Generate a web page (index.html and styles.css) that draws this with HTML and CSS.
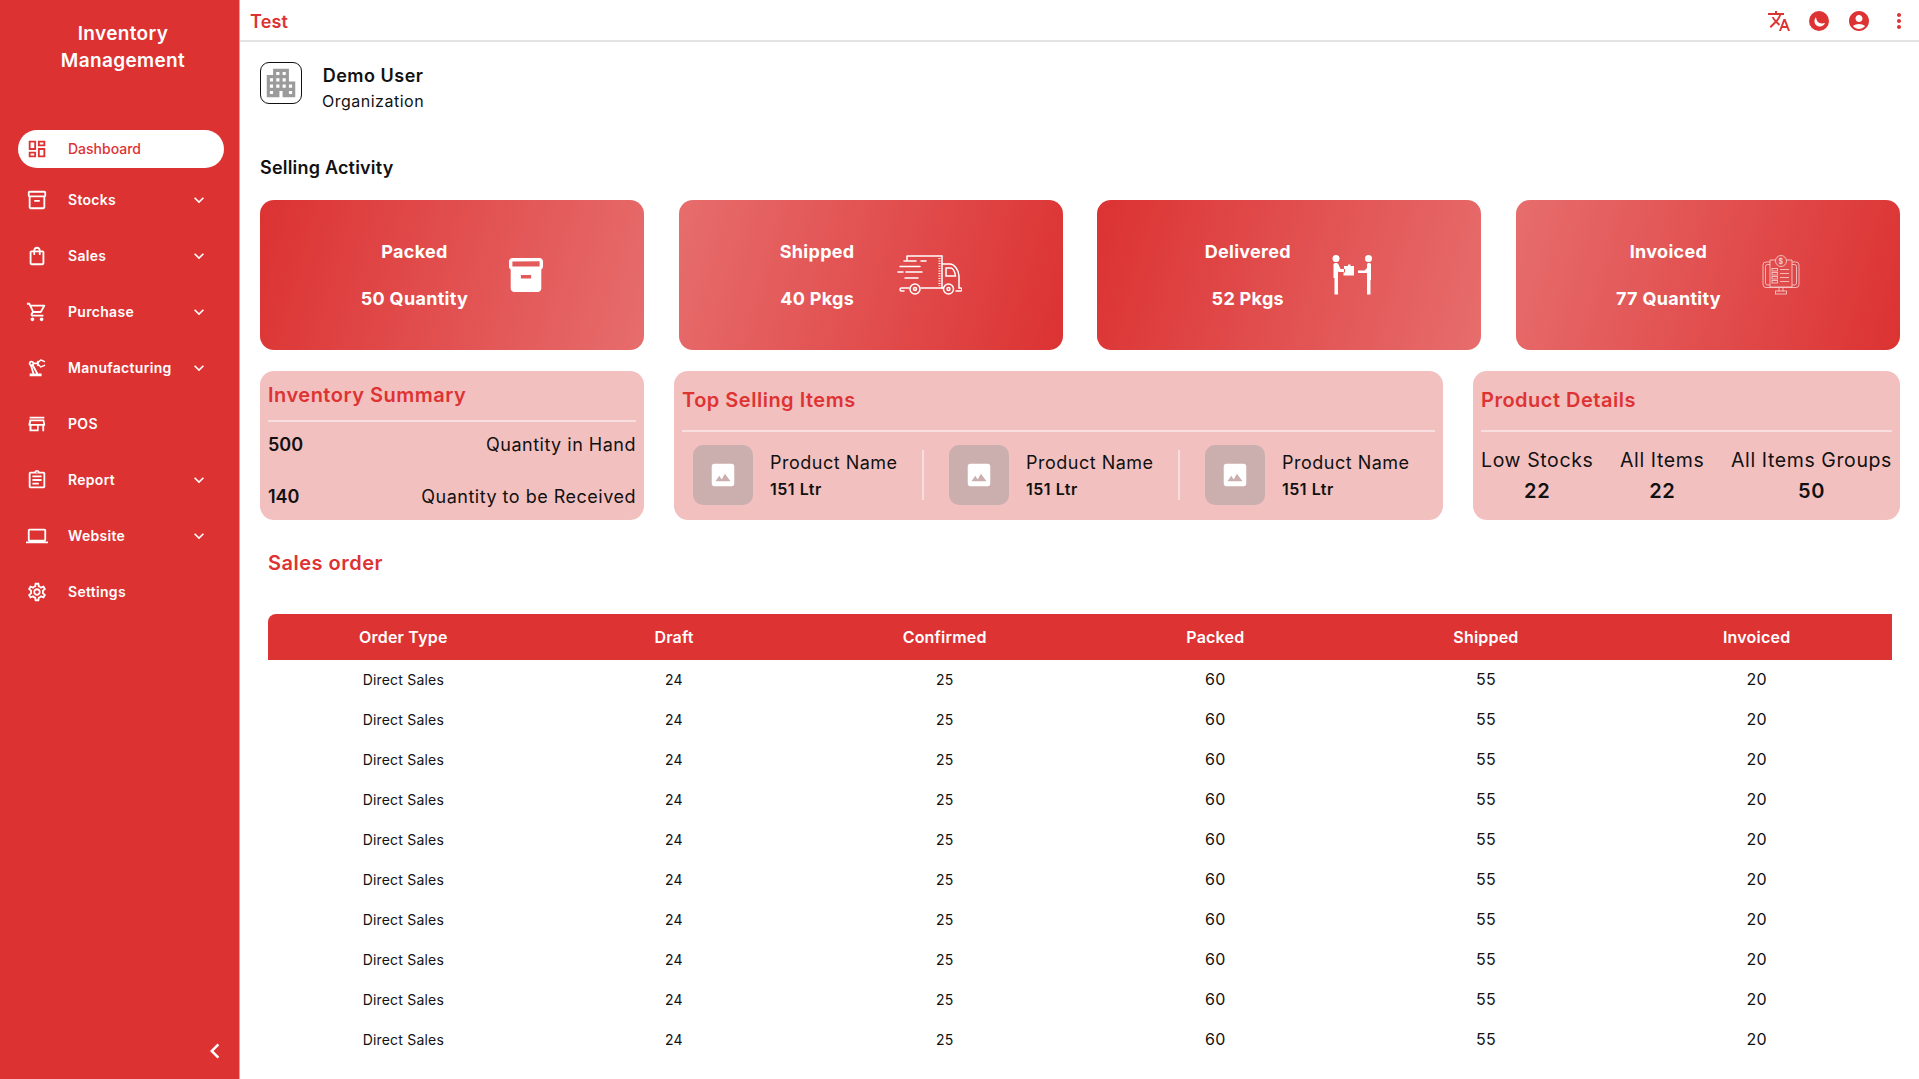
FILE: index.html
```html
<!DOCTYPE html>
<html lang="en">
<head>
<meta charset="UTF-8" />
<meta name="viewport" content="width=device-width, initial-scale=1" />
<title>Inventory Management</title>
<link rel="stylesheet" href="styles.css">
</head>
<body>
<div class="app">

  <!-- Sidebar -->
  <aside class="sidebar">
    <div class="brand">Inventory Management</div>
    <nav class="nav">
      <a class="nav-item active">
        <svg class="nav-icon" viewBox="0 0 24 24"><path d="M19 5v2h-4V5h4M9 5v6H5V5h4m10 8v6h-4v-6h4M9 17v2H5v-2h4M21 3h-8v6h8V3zM11 3H3v10h8V3zm10 8h-8v10h8V11zm-10 4H3v6h8v-6z"/></svg>
        <span class="nav-label">Dashboard</span>
      </a>
      <a class="nav-item">
        <svg class="nav-icon" viewBox="0 0 24 24"><path d="M20 2H4c-1 0-2 .9-2 2v3.01c0 .72.43 1.34 1 1.69V20c0 1.1 1.1 2 2 2h14c.9 0 2-.9 2-2V8.7c.57-.35 1-.97 1-1.69V4c0-1.1-1-2-2-2zm-1 18H5V9h14v11zm1-13H4V4h16v3zM9 12h6v2H9z"/></svg>
        <span class="nav-label">Stocks</span>
        <svg class="nav-arrow" viewBox="0 0 24 24"><path d="M16.59 8.59L12 13.17 7.41 8.59 6 10l6 6 6-6z"/></svg>
      </a>
      <a class="nav-item">
        <svg class="nav-icon" viewBox="0 0 24 24"><path d="M18 6h-2c0-2.21-1.79-4-4-4S8 3.79 8 6H6c-1.1 0-2 .9-2 2v12c0 1.1.9 2 2 2h12c1.1 0 2-.9 2-2V8c0-1.1-.9-2-2-2zm-6-2c1.1 0 2 .9 2 2h-4c0-1.1.9-2 2-2zm6 16H6V8h2v2c0 .55.45 1 1 1s1-.45 1-1V8h4v2c0 .55.45 1 1 1s1-.45 1-1V8h2v12z"/></svg>
        <span class="nav-label">Sales</span>
        <svg class="nav-arrow" viewBox="0 0 24 24"><path d="M16.59 8.59L12 13.17 7.41 8.59 6 10l6 6 6-6z"/></svg>
      </a>
      <a class="nav-item">
        <svg class="nav-icon" viewBox="0 0 24 24"><path d="M15.55 13c.75 0 1.41-.41 1.75-1.03l3.58-6.49c.37-.66-.11-1.48-.87-1.48H5.21l-.94-2H1v2h2l3.6 7.59-1.35 2.44C4.52 15.37 5.48 17 7 17h12v-2H7l1.1-2h7.45zM6.16 6h12.15l-2.76 5H8.53L6.16 6zM7 18c-1.1 0-1.99.9-1.99 2S5.9 22 7 22s2-.9 2-2-.9-2-2-2zm10 0c-1.1 0-1.99.9-1.99 2s.89 2 1.99 2 2-.9 2-2-.9-2-2-2z"/></svg>
        <span class="nav-label">Purchase</span>
        <svg class="nav-arrow" viewBox="0 0 24 24"><path d="M16.59 8.59L12 13.17 7.41 8.59 6 10l6 6 6-6z"/></svg>
      </a>
      <a class="nav-item">
        <svg class="nav-icon" viewBox="0 0 24 24"><path d="M19.93 8.35l-3.6 1.68L14 7.7V6.3l2.33-2.33 3.6 1.68c.38.18.82.01 1-.36.18-.38.01-.82-.36-1l-3.92-1.83c-.38-.18-.83-.1-1.13.2L13.78 4.4c-.18-.24-.46-.4-.78-.4-.55 0-1 .45-1 1v1H8.82C8.34 4.65 6.98 3.73 5.4 4.07c-1.16.25-2.15 1.25-2.36 2.43-.22 1.32.46 2.47 1.48 3.08L7.08 18H4v3h13v-3h-3.62L8.41 8.77c.17-.24.31-.49.41-.77H12v1c0 .55.45 1 1 1 .32 0 .6-.16.78-.4l1.74 1.74c.3.3.75.38 1.13.2l3.92-1.83c.38-.18.54-.62.36-1-.18-.37-.62-.54-1-.36zM6 8c-.55 0-1-.45-1-1s.45-1 1-1 1 .45 1 1-.45 1-1 1zm5.11 10H9.17l-2.46-8h.1l4.3 8z"/></svg>
        <span class="nav-label">Manufacturing</span>
        <svg class="nav-arrow" viewBox="0 0 24 24"><path d="M16.59 8.59L12 13.17 7.41 8.59 6 10l6 6 6-6z"/></svg>
      </a>
      <a class="nav-item">
        <svg class="nav-icon" viewBox="0 0 24 24"><path d="M18.36 9l.6 3H5.04l.6-3h12.72M20 4H4v2h16V4zm.2 3H3.8L2.8 12v2h1v6h10v-6h4v6h2v-6h1v-2l-1-5zM6 18v-4h6v4H6z"/></svg>
        <span class="nav-label">POS</span>
      </a>
      <a class="nav-item">
        <svg class="nav-icon" viewBox="0 0 24 24"><path d="M7 15h7v2H7zm0-4h10v2H7zm0-4h10v2H7zm12-4h-4.18C14.4 1.84 13.3 1 12 1c-1.3 0-2.4.84-2.82 2H5c-.14 0-.27.01-.4.04-.39.08-.74.28-1.01.55-.18.18-.33.4-.43.64-.1.23-.16.49-.16.77v14c0 .27.06.54.16.78s.25.45.43.64c.27.27.62.47 1.01.55.13.02.26.03.4.03h14c1.1 0 2-.9 2-2V5c0-1.1-.9-2-2-2zm-7-.25c.41 0 .75.34.75.75s-.34.75-.75.75-.75-.34-.75-.75.34-.75.75-.75zM19 19H5V5h14v14z"/></svg>
        <span class="nav-label">Report</span>
        <svg class="nav-arrow" viewBox="0 0 24 24"><path d="M16.59 8.59L12 13.17 7.41 8.59 6 10l6 6 6-6z"/></svg>
      </a>
      <a class="nav-item">
        <svg class="nav-icon" viewBox="0 0 24 24"><path d="M20 18c1.1 0 1.99-.9 1.99-2L22 6c0-1.1-.9-2-2-2H4c-1.1 0-2 .9-2 2v10c0 1.1.9 2 2 2H0v2h24v-2h-4zM4 6h16v10H4V6z"/></svg>
        <span class="nav-label">Website</span>
        <svg class="nav-arrow" viewBox="0 0 24 24"><path d="M16.59 8.59L12 13.17 7.41 8.59 6 10l6 6 6-6z"/></svg>
      </a>
      <a class="nav-item">
        <svg class="nav-icon" viewBox="0 0 24 24"><path d="M19.43 12.98c.04-.32.07-.64.07-.98 0-.34-.03-.66-.07-.98l2.11-1.65c.19-.15.24-.42.12-.64l-2-3.46c-.09-.16-.26-.25-.44-.25-.06 0-.12.01-.17.03l-2.49 1c-.52-.4-1.08-.73-1.69-.98l-.38-2.65C14.46 2.18 14.25 2 14 2h-4c-.25 0-.46.18-.49.42l-.38 2.65c-.61.25-1.17.59-1.69.98l-2.49-1c-.06-.02-.12-.03-.18-.03-.17 0-.34.09-.43.25l-2 3.46c-.13.22-.07.49.12.64l2.11 1.65c-.04.32-.07.65-.07.98 0 .33.03.66.07.98l-2.11 1.65c-.19.15-.24.42-.12.64l2 3.46c.09.16.26.25.44.25.06 0 .12-.01.17-.03l2.49-1c.52.4 1.08.73 1.69.98l.38 2.65c.03.24.24.42.49.42h4c.25 0 .46-.18.49-.42l.38-2.65c.61-.25 1.17-.59 1.69-.98l2.49 1c.06.02.12.03.18.03.17 0 .34-.09.43-.25l2-3.46c.12-.22.07-.49-.12-.64l-2.11-1.65zm-1.98-1.71c.04.31.05.52.05.73 0 .21-.02.43-.05.73l-.14 1.13.89.7 1.08.84-.7 1.21-1.27-.51-1.04-.42-.9.68c-.43.32-.84.56-1.25.73l-1.06.43-.16 1.13-.2 1.35h-1.4l-.19-1.35-.16-1.13-1.06-.43c-.43-.18-.83-.41-1.23-.71l-.91-.7-1.06.43-1.27.51-.7-1.21 1.08-.84.89-.7-.14-1.13c-.03-.31-.05-.54-.05-.74s.02-.43.05-.73l.14-1.13-.89-.7-1.08-.84.7-1.21 1.27.51 1.04.42.9-.68c.43-.32.84-.56 1.25-.73l1.06-.43.16-1.13.2-1.35h1.39l.19 1.35.16 1.13 1.06.43c.43.18.83.41 1.23.71l.91.7 1.06-.43 1.27-.51.7 1.21-1.07.85-.89.7.14 1.13zM12 8c-2.21 0-4 1.79-4 4s1.79 4 4 4 4-1.79 4-4-1.79-4-4-4zm0 6c-1.1 0-2-.9-2-2s.9-2 2-2 2 .9 2 2-.9 2-2 2z"/></svg>
        <span class="nav-label">Settings</span>
      </a>
    </nav>
    <div class="collapse">
      <svg viewBox="0 0 24 24"><path d="M15.41 7.41L14 6l-6 6 6 6 1.41-1.41L10.83 12z"/></svg>
    </div>
  </aside>

  <div class="main">

    <!-- Top bar -->
    <header class="topbar">
      <div class="topbar-title">Test</div>
      <div class="topbar-icons">
        <svg viewBox="0 0 24 24"><path d="M12.87 15.07l-2.54-2.51.03-.03c1.74-1.94 2.98-4.17 3.71-6.53H17V4h-7V2H8v2H1v1.99h11.17C11.5 7.92 10.44 9.75 9 11.35 8.07 10.32 7.3 9.19 6.69 8h-2c.73 1.63 1.73 3.17 2.98 4.56l-5.09 5.02L4 19l5-5 3.11 3.11.76-2.04zM18.5 10h-2L12 22h2l1.12-3h4.75L21 22h2l-4.5-12zm-2.62 7l1.62-4.33L19.12 17h-3.24z"/></svg>
        <svg viewBox="0 0 24 24"><circle cx="12" cy="12" r="10"/><path class="moon" d="M9 8C6.500 11 7 15.500 10.500 17c3 1.500 6.500 0 7.500-3-3 1-6 .5-7.500-1.500C9.500 11 9 9.500 9 8z"/></svg>
        <svg viewBox="0 0 24 24"><path d="M12 2C6.48 2 2 6.48 2 12s4.48 10 10 10 10-4.48 10-10S17.52 2 12 2zm0 4c1.93 0 3.5 1.57 3.5 3.5S13.93 13 12 13s-3.5-1.57-3.5-3.5S10.07 6 12 6zm0 14c-2.03 0-4.43-.82-6.14-2.88C7.55 15.8 9.68 15 12 15s4.45.8 6.14 2.12C16.43 19.18 14.03 20 12 20z"/></svg>
        <svg viewBox="0 0 24 24"><path d="M12 8c1.1 0 2-.9 2-2s-.9-2-2-2-2 .9-2 2 .9 2 2 2zm0 2c-1.1 0-2 .9-2 2s.9 2 2 2 2-.9 2-2-.9-2-2-2zm0 6c-1.1 0-2 .9-2 2s.9 2 2 2 2-.9 2-2-.9-2-2-2z"/></svg>
      </div>
    </header>

    <div class="content">

      <div class="org">
        <div class="org-logo">
          <svg viewBox="0 0 24 24"><path d="M17 11V3H7v4H3v14h8v-4h2v4h8V11h-4zM7 19H5v-2h2v2zm0-4H5v-2h2v2zm0-4H5V9h2v2zm4 4H9v-2h2v2zm0-4H9V9h2v2zm0-4H9V5h2v2zm4 8h-2v-2h2v2zm0-4h-2V9h2v2zm0-4h-2V5h2v2zm4 12h-2v-2h2v2zm0-4h-2v-2h2v2z"/></svg>
        </div>
        <div class="org-text">
          <div class="org-name">Demo User</div>
          <div class="org-type">Organization</div>
        </div>
      </div>

      <h2 class="section-title">Selling Activity</h2>

      <!-- Activity cards -->
      <div class="cards">
        <div class="card card-right">
          <div class="card-text"><div>Packed</div><div>50 Quantity</div></div>
          <svg class="card-icon-box" viewBox="2 2 20 20"><path d="M20 2H4c-1 0-2 .9-2 2v3.01c0 .72.43 1.34 1 1.69V20c0 1.1 1.1 2 2 2h14c.9 0 2-.9 2-2V8.7c.57-.35 1-.97 1-1.69V4c0-1.1-1-2-2-2zm-5 12H9v-2h6v2zm5-7H4V4l16-.02V7z"/></svg>
        </div>
        <div class="card card-left">
          <div class="card-text"><div>Shipped</div><div>40 Pkgs</div></div>
          <svg class="card-art card-art-truck" viewBox="0 0 66 40">
            <path d="M11 1h35v32H25M11 1v4M13 33H5.500a1.500 1.500 0 0 0 0 3H8"/>
            <path d="M46 9h8c4 0 9 6 9 12v12h1.500a1.500 1.500 0 0 1 0 3H60M46 33h1M50 13h5c2 0 4 4 4.500 8H50z"/>
            <path d="M8 6h12M25 6h5M4 11.500h20M2 17h5M10 17h16M9 23h13"/>
            <circle cx="19" cy="34" r="5"/><circle cx="19" cy="34" r="1.500"/>
            <circle cx="52.500" cy="34" r="5"/><circle cx="52.500" cy="34" r="1.500"/>
            <path class="dotted" d="M43.500 3v28"/>
          </svg>
        </div>
        <div class="card card-right">
          <div class="card-text"><div>Delivered</div><div>52 Pkgs</div></div>
          <svg class="card-art card-art-people" viewBox="22 14 42 42">
            <circle cx="26" cy="18.500" r="3.500"/><circle cx="58.500" cy="18.500" r="3.500"/>
            <path d="M23.500 24.500c0-1 1-1.500 2.500-1.500s2 .5 2.500 1.500l2 4.500h3.500v3h-5.500l-.5-1V54.500h-3.500V38h-1z"/>
            <path d="M34 26h4v-1.500h2.500V26H44v9.500H33.500V32.500h1.500V29h-1z"/>
            <path d="M57 24.500c0-1 1-1.500 2-1.500s2 .5 2 1.500V40h-.5v14.500h-3.500V33h-9v-2.500h6.500L57 28z"/>
          </svg>
        </div>
        <div class="card card-left">
          <div class="card-text"><div>Invoiced</div><div>77 Quantity</div></div>
          <svg class="card-art card-art-invoice" viewBox="21 15 38 40">
            <rect x="22" y="22" width="36" height="25.500" rx="3"/>
            <rect x="24.500" y="24.500" width="31" height="20.500" rx="2"/>
            <path class="fill-card" d="M29 20h22v27H29z"/>
            <circle class="fill-card" cx="40" cy="21" r="5.500"/>
            <text class="coin" x="40" y="23.500">$</text>
            <rect x="31" y="28.500" width="5.500" height="2.500"/><rect x="31" y="32.500" width="5.500" height="2.500"/>
            <rect x="31" y="36.500" width="5.500" height="2.500"/><rect x="31" y="40.500" width="5.500" height="2.500"/>
            <path d="M39 29.500h9M39 33.500h9M39 37.500h9M39 41.500h9M38 47.500v4M42 47.500v4"/>
            <rect x="34.500" y="51" width="11" height="3"/>
          </svg>
        </div>
      </div>

      <!-- Summary row -->
      <div class="panels">
        <section class="panel panel-inventory">
          <h3 class="panel-title">Inventory Summary</h3>
          <div class="stat-row"><strong>500</strong><span>Quantity in Hand</span></div>
          <div class="stat-row"><strong>140</strong><span>Quantity to be Received</span></div>
        </section>

        <section class="panel panel-top">
          <h3 class="panel-title">Top Selling Items</h3>
          <div class="products">
            <div class="product">
              <div class="thumb"><svg viewBox="0 0 24 24"><path d="M19 3H5c-1.100 0-2 .9-2 2v14c0 1.100.9 2 2 2h14c1.100 0 2-.9 2-2V5c0-1.100-.9-2-2-2zM6 17l3-4.500 2 3 2.500-4.500 4.500 6z"/></svg></div>
              <div><div class="product-name">Product Name</div><div class="product-qty">151 Ltr</div></div>
            </div>
            <div class="product">
              <div class="thumb"><svg viewBox="0 0 24 24"><path d="M19 3H5c-1.100 0-2 .9-2 2v14c0 1.100.9 2 2 2h14c1.100 0 2-.9 2-2V5c0-1.100-.9-2-2-2zM6 17l3-4.500 2 3 2.500-4.500 4.500 6z"/></svg></div>
              <div><div class="product-name">Product Name</div><div class="product-qty">151 Ltr</div></div>
            </div>
            <div class="product">
              <div class="thumb"><svg viewBox="0 0 24 24"><path d="M19 3H5c-1.100 0-2 .9-2 2v14c0 1.100.9 2 2 2h14c1.100 0 2-.9 2-2V5c0-1.100-.9-2-2-2zM6 17l3-4.500 2 3 2.500-4.500 4.500 6z"/></svg></div>
              <div><div class="product-name">Product Name</div><div class="product-qty">151 Ltr</div></div>
            </div>
          </div>
        </section>

        <section class="panel panel-details">
          <h3 class="panel-title">Product Details</h3>
          <div class="details">
            <div class="detail"><span>Low Stocks</span><strong>22</strong></div>
            <div class="detail"><span>All Items</span><strong>22</strong></div>
            <div class="detail"><span>All Items Groups</span><strong>50</strong></div>
          </div>
        </section>
      </div>

      <!-- Sales order table -->
      <div class="orders">
        <h3 class="orders-title">Sales order</h3>
        <table class="orders-table">
          <thead>
            <tr><th>Order Type</th><th>Draft</th><th>Confirmed</th><th>Packed</th><th>Shipped</th><th>Invoiced</th></tr>
          </thead>
          <tbody>
            <tr><td>Direct Sales</td><td>24</td><td>25</td><td>60</td><td>55</td><td>20</td></tr>
            <tr><td>Direct Sales</td><td>24</td><td>25</td><td>60</td><td>55</td><td>20</td></tr>
            <tr><td>Direct Sales</td><td>24</td><td>25</td><td>60</td><td>55</td><td>20</td></tr>
            <tr><td>Direct Sales</td><td>24</td><td>25</td><td>60</td><td>55</td><td>20</td></tr>
            <tr><td>Direct Sales</td><td>24</td><td>25</td><td>60</td><td>55</td><td>20</td></tr>
            <tr><td>Direct Sales</td><td>24</td><td>25</td><td>60</td><td>55</td><td>20</td></tr>
            <tr><td>Direct Sales</td><td>24</td><td>25</td><td>60</td><td>55</td><td>20</td></tr>
            <tr><td>Direct Sales</td><td>24</td><td>25</td><td>60</td><td>55</td><td>20</td></tr>
            <tr><td>Direct Sales</td><td>24</td><td>25</td><td>60</td><td>55</td><td>20</td></tr>
            <tr><td>Direct Sales</td><td>24</td><td>25</td><td>60</td><td>55</td><td>20</td></tr>
          </tbody>
        </table>
      </div>

    </div>
  </div>
</div>
</body>
</html>
```

FILE: styles.css
```css
/* Reset & base */
* {
  box-sizing: border-box;
}
body {
  margin: 0;
  height: 100vh;
  overflow: hidden;
  background: #fff;
  color: #111;
  font-family: Inter, "Noto Sans", sans-serif;
  letter-spacing: .5px;
}
h2, h3 {
  margin: 0;
}

.app {
  display: flex;
  height: 100vh;
}

/* Sidebar */
.sidebar {
  width: 240px;
  flex: none;
  display: flex;
  flex-direction: column;
  background: #dc3232;
  border-right: 1px solid #c9a9a9;
  color: #fff;
}
.brand {
  width: 200px;
  margin: 20px 0 0 23px;
  height: 90px;
  font-size: 19px;
  font-weight: 600;
  line-height: 27px;
  letter-spacing: .35px;
  text-align: center;
}
.nav {
  display: flex;
  flex-direction: column;
  padding: 20px 0 0 18px;
}
.nav-item {
  width: 206px;
  height: 56px;
  display: flex;
  align-items: center;
  padding: 0 15px 0 8px;
  font-size: 14px;
  font-weight: 600;
  letter-spacing: .3px;
}
.nav-item.active {
  height: 38px;
  margin-bottom: 4px;
  background: #fff;
  border-radius: 19px;
  color: #dd3333;
  font-weight: 500;
  letter-spacing: 0;
}
.nav-icon {
  width: 22px;
  height: 22px;
  flex: none;
  fill: currentColor;
}
.nav-label {
  margin-left: 20px;
  padding-bottom: 2px;
  flex: 1;
}
.nav-arrow {
  width: 20px;
  height: 20px;
  flex: none;
  fill: currentColor;
}
.collapse {
  margin-top: auto;
  padding: 0 9px 13px 0;
  display: flex;
  justify-content: flex-end;
}
.collapse svg {
  width: 30px;
  height: 30px;
  fill: #fff;
}

/* Top bar */
.main {
  flex: 1;
  min-width: 0;
}
.topbar {
  height: 42px;
  display: flex;
  align-items: center;
  justify-content: space-between;
  padding: 2px 8px 0 10px;
  border-bottom: 2px solid #e3e3e3;
}
.topbar-title {
  padding-top: 1px;
  color: #dd3333;
  font-size: 18px;
  font-weight: 600;
  letter-spacing: .2px;
}
.topbar-icons {
  display: flex;
  gap: 16px;
}
.topbar-icons svg {
  width: 24px;
  height: 24px;
  fill: #dd3333;
}
.topbar-icons .moon {
  fill: #fff;
}

/* Content */
.content {
  padding: 20px 19px 0 20px;
}

.org {
  display: flex;
  height: 56px;
}
.org-logo {
  width: 42px;
  height: 42px;
  display: flex;
  align-items: center;
  justify-content: center;
  border: 1px solid #111;
  border-radius: 9px;
}
.org-logo svg {
  width: 38px;
  height: 38px;
  fill: #9b9b9b;
}
.org-text {
  margin-left: 20px;
  text-align: center;
}
.org-name {
  margin-top: 2px;
  font-size: 18px;
  font-weight: 600;
  line-height: 24px;
}
.org-type {
  margin-top: 1px;
  font-size: 16px;
  line-height: 24px;
}
.section-title {
  margin-top: 38px;
  font-size: 18px;
  font-weight: 600;
  line-height: 24px;
  letter-spacing: .2px;
}

/* Activity cards */
.cards {
  display: grid;
  grid-template-columns: repeat(4, 384px);
  justify-content: space-between;
  margin-top: 20px;
}
.card {
  height: 150px;
  display: flex;
  align-items: center;
  justify-content: center;
  gap: 41px;
  border-radius: 14px;
  color: #fff;
}
.card-right {
  background: linear-gradient(105deg, #dc3232, #e76d6d);
}
.card-left {
  background: linear-gradient(105deg, #e76d6d, #dc3232);
}
.card-text {
  display: flex;
  flex-direction: column;
  gap: 23px;
  text-align: center;
  font-size: 18px;
  font-weight: 700;
  line-height: 24px;
  letter-spacing: .3px;
}
.card-icon-box {
  width: 34px;
  height: 34px;
  fill: #fff;
}
.card-art {
  flex: none;
}
.card-art-truck {
  width: 66px;
  height: 40px;
  fill: none;
  stroke: #fff;
  stroke-width: 1.5;
  stroke-linecap: round;
}
.card-art-truck .dotted {
  stroke-width: 2;
  stroke-dasharray: 1 1.5;
  stroke-linecap: butt;
}
.card-art-people {
  width: 42px;
  height: 42px;
  fill: #fff;
}
.card-art-invoice {
  width: 38px;
  height: 40px;
  fill: none;
  stroke: #f8d5d5;
  stroke-width: .8;
}
.card-art-invoice .fill-card {
  fill: #e04c4c;
}
.card-art-invoice .coin {
  fill: #f8d5d5;
  stroke: none;
  font-size: 7px;
  font-weight: 600;
  text-anchor: middle;
}

/* Summary panels */
.panels {
  display: flex;
  justify-content: space-between;
  margin-top: 21px;
}
.panel {
  height: 149px;
  padding: 0 8px;
  background: #f3c0c0;
  border-radius: 14px;
}
.panel-inventory {
  width: 384px;
}
.panel-top {
  width: 769px;
}
.panel-details {
  width: 427px;
}
.panel-title {
  padding-top: 15px;
  padding-bottom: 16px;
  border-bottom: 2px solid #f8dede;
  color: #dd3333;
  font-size: 20px;
  font-weight: 600;
  line-height: 28px;
}
.panel-inventory .panel-title {
  padding-top: 10px;
  padding-bottom: 11px;
}
.stat-row {
  display: flex;
  justify-content: space-between;
  align-items: center;
  height: 52px;
  font-size: 18px;
}
.stat-row:nth-child(2) {
  margin-top: -4px;
}
.stat-row strong {
  font-weight: 600;
  letter-spacing: 0;
}

.products {
  display: flex;
  padding: 13px 0 0 11px;
}
.product {
  width: 231px;
  height: 60px;
  flex: none;
  margin-right: 25px;
  display: flex;
  align-items: center;
  gap: 17px;
  white-space: nowrap;
}
.product:last-child {
  margin-right: 0;
  width: 190px;
}
.product::after {
  content: "";
  width: 2px;
  height: 50px;
  margin-left: auto;
  background: #f8dede;
}
.product:last-child::after {
  display: none;
}
.thumb {
  width: 60px;
  height: 60px;
  flex: none;
  display: flex;
  align-items: center;
  justify-content: center;
  background: #cbaeae;
  border-radius: 10px;
}
.thumb svg {
  width: 30px;
  height: 30px;
  fill: #fff;
}
.product-name {
  font-size: 18px;
  line-height: 26px;
}
.product-qty {
  margin-top: 1px;
  font-size: 16px;
  font-weight: 600;
  line-height: 24px;
}

.details {
  display: flex;
  justify-content: space-between;
  padding-top: 15px;
}
.detail {
  display: flex;
  flex-direction: column;
  align-items: center;
  gap: 5px;
  font-size: 19.5px;
  line-height: 26px;
  letter-spacing: .6px;
}
.detail strong {
  font-size: 20px;
  font-weight: 600;
}

/* Sales order */
.orders {
  padding: 0 8px;
}
.orders-title {
  margin-top: 29px;
  color: #dd3333;
  font-size: 20px;
  font-weight: 600;
  line-height: 28px;
}
.orders-table {
  width: 100%;
  margin-top: 37px;
  table-layout: fixed;
  border-collapse: collapse;
  letter-spacing: .2px;
}
.orders-table th {
  height: 46px;
  padding: 0;
  background: #dd3333;
  color: #fff;
  font-size: 16px;
  font-weight: 600;
}
.orders-table th:first-child {
  border-top-left-radius: 8px;
}
.orders-table td {
  height: 40px;
  padding: 0 0 2px;
  text-align: center;
  font-size: 14px;
}
.orders-table td:nth-child(n+4) {
  font-size: 16px;
}
```
